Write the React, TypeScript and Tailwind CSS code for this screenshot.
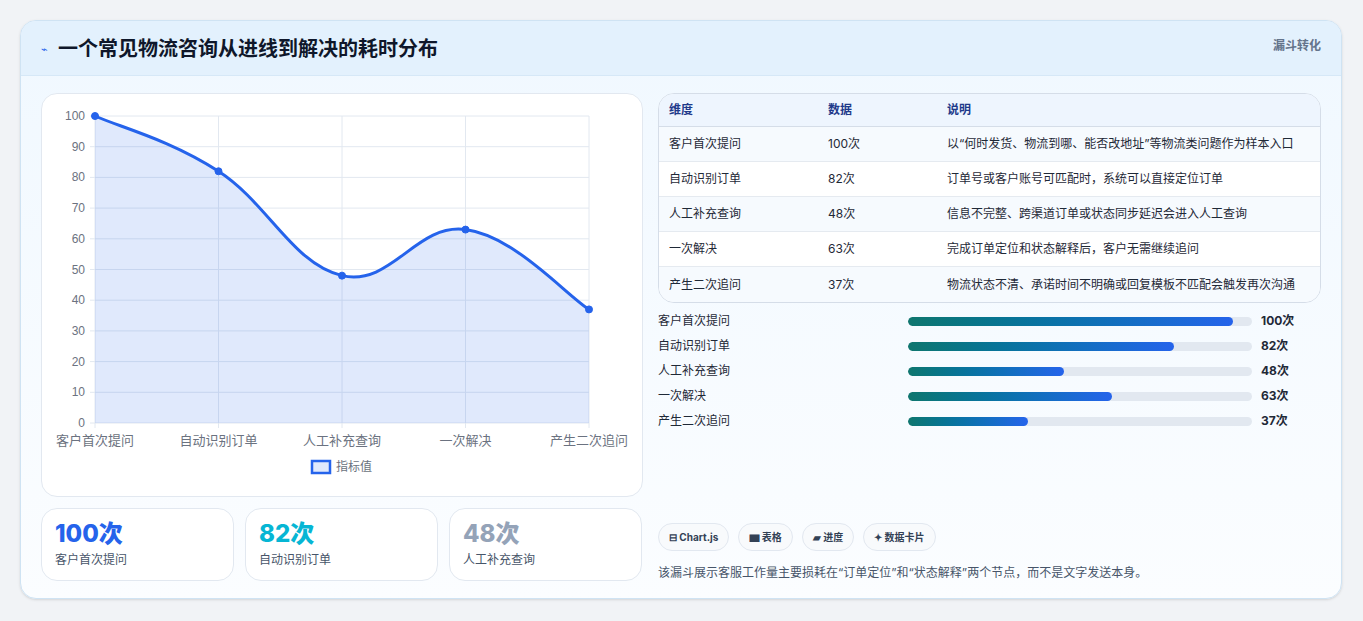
import React from "react";

const rows = [
  ["客户首次提问", "100次", "以“何时发货、物流到哪、能否改地址”等物流类问题作为样本入口", 100],
  ["自动识别订单", "82次", "订单号或客户账号可匹配时，系统可以直接定位订单", 82],
  ["人工补充查询", "48次", "信息不完整、跨渠道订单或状态同步延迟会进入人工查询", 48],
  ["一次解决", "63次", "完成订单定位和状态解释后，客户无需继续追问", 63],
  ["产生二次追问", "37次", "物流状态不清、承诺时间不明确或回复模板不匹配会触发再次沟通", 37],
] as const;

function Chart() {
  const L = 53, R = 547, T = 22, B = 329;
  const xs = [0, 1, 2, 3, 4].map((i) => L + (i * (R - L)) / 4);
  const ys = rows.map((r) => B - ((r[3] as number) * (B - T)) / 100);
  const pts = xs.map((x, i) => [x, ys[i]]);
  let d = `M${pts[0][0]},${pts[0][1]}`;
  for (let i = 0; i < pts.length - 1; i++) {
    const p0 = pts[Math.max(0, i - 1)], p1 = pts[i], p2 = pts[i + 1], p3 = pts[Math.min(pts.length - 1, i + 2)];
    const t = 0.2;
    const c1 = [p1[0] + (p2[0] - p0[0]) * t, p1[1] + (p2[1] - p0[1]) * t];
    const c2 = [p2[0] - (p3[0] - p1[0]) * t, p2[1] - (p3[1] - p1[1]) * t];
    d += ` C${c1[0]},${c1[1]} ${c2[0]},${c2[1]} ${p2[0]},${p2[1]}`;
  }
  const area = `${d} L${R},${B} L${L},${B} Z`;
  return (
    <svg width="602" height="403" className="block">
      {Array.from({ length: 11 }).map((_, i) => {
        const y = B - (i * (B - T)) / 10;
        return (
          <g key={i}>
            <line x1={L - 5} x2={R} y1={y} y2={y} stroke="#e2e8f0" />
            <text x={L - 10} y={y + 4} textAnchor="end" fontSize="12" fill="#6b7280" fontFamily="Liberation Sans, sans-serif">{i * 10}</text>
          </g>
        );
      })}
      {xs.map((x, i) => (
        <line key={i} x1={x} x2={x} y1={T} y2={B + 5} stroke="#e2e8f0" />
      ))}
      <path d={area} fill="rgba(37,99,235,0.14)" />
      <path d={d} fill="none" stroke="#2563eb" strokeWidth="3" />
      {pts.map((p, i) => (
        <circle key={i} cx={p[0]} cy={p[1]} r="3.5" fill="#2563eb" stroke="#2563eb" />
      ))}
      {xs.map((x, i) => (
        <text key={i} x={x} y={351} textAnchor="middle" fontSize="13" fill="#6b7280" fontFamily="Noto Sans CJK SC, sans-serif">{rows[i][0]}</text>
      ))}
      <rect x="270" y="367" width="18" height="12" fill="rgba(37,99,235,0.14)" stroke="#2563eb" strokeWidth="2.5" />
      <text x="294" y="377" fontSize="12" fill="#6b7280" fontFamily="Noto Sans CJK SC, sans-serif">指标值</text>
    </svg>
  );
}

export default function App() {
  return (
    <div className="w-[1363px] h-[621px] bg-[#f1f3f6] pt-5 pl-5" style={{ fontFamily: "Inter, 'Noto Sans CJK SC', sans-serif" }}>
      <div className="w-[1322px] h-[579px] rounded-2xl border border-[#cfe3f3] bg-gradient-to-b from-[#f0f8ff] to-[#fbfdff] overflow-hidden shadow-sm">
        <div className="h-[55px] bg-[#e3f1fd] border-b border-[#d6e8f7] flex items-start justify-between px-5">
          <div className="flex items-center gap-[10px] mt-[13px]">
            <span className="text-[#2563eb] text-[11px]">⌁</span>
            <span className="text-[20px] font-bold text-[#0f172a]">一个常见物流咨询从进线到解决的耗时分布</span>
          </div>
          <span className="mt-[16px] text-[12px] font-bold text-[#64748b]">漏斗转化</span>
        </div>
        <div className="flex gap-[15px] px-5 pt-[17px]">
          <div className="w-[602px] flex flex-col gap-[11px]">
            <div className="h-[404px] rounded-2xl border border-[#e2e8f0] bg-white overflow-hidden">
              <Chart />
            </div>
            <div className="flex gap-[11px]">
              {[["100次", "text-[#2563eb]", "客户首次提问"], ["82次", "text-[#06b6d4]", "自动识别订单"], ["48次", "text-[#94a3b8]", "人工补充查询"]].map(([v, c, l]) => (
                <div key={l} className="w-[193px] h-[73px] rounded-2xl border border-[#e2e8f0] bg-white px-[13px] pt-[9px]">
                  <div className={`text-[24px] font-extrabold leading-[32px] ${c}`}>{v}</div>
                  <div className="text-[12px] text-[#475569] mt-[1px]">{l}</div>
                </div>
              ))}
            </div>
          </div>
          <div className="w-[666px] flex flex-col">
            <div className="rounded-2xl border border-[#d5dde8] bg-white overflow-hidden text-[12px]">
              <div className="h-[33px] bg-[#eef5fe] flex items-center px-[10px] border-b border-[#d5dde8] font-bold text-[#1e3a8a]">
                <div className="w-[159px]">维度</div><div className="w-[119px]">数据</div><div>说明</div>
              </div>
              {rows.map((r, i) => (
                <div key={i} className={`h-[35px] flex items-center px-[10px] text-[#1f2937] ${i < 4 ? "border-b border-[#e5eaf0]" : ""} ${i % 2 === 0 ? "bg-[#f6fafe]" : "bg-white"}`}>
                  <div className="w-[159px]">{r[0]}</div><div className="w-[119px]">{r[1]}</div><div>{r[2]}</div>
                </div>
              ))}
            </div>
            <div className="mt-[9px] flex flex-col gap-[7px]">
              {rows.map((r, i) => (
                <div key={i} className="h-[18px] flex items-center text-[12px]">
                  <div className="w-[250px] text-[#1f2937]">{r[0]}</div>
                  <div className="w-[344px] h-[9px] rounded-full bg-[#e2e8f0] overflow-hidden">
                    <div className="h-full rounded-full bg-gradient-to-r from-[#0f766e] to-[#2563eb]" style={{ width: `${((r[3] as number) / 106) * 100}%` }} />
                  </div>
                  <div className="ml-[9px] font-bold text-[#1f2937]">{r[1]}</div>
                </div>
              ))}
            </div>
            <div className="mt-[93px] flex gap-[9px]">
              {["⊟ Chart.js", "▆ 表格", "▰ 进度", "✦ 数据卡片"].map((t) => (
                <div key={t} className="h-[28px] px-[10px] rounded-full border border-[#e2e8f0] bg-[#f8fafc] flex items-center text-[10px] font-bold text-[#334155]">{t}</div>
              ))}
            </div>
            <div className="mt-[13px] text-[12px] text-[#475569]">该漏斗展示客服工作量主要损耗在“订单定位”和“状态解释”两个节点，而不是文字发送本身。</div>
          </div>
        </div>
      </div>
    </div>
  );
}
